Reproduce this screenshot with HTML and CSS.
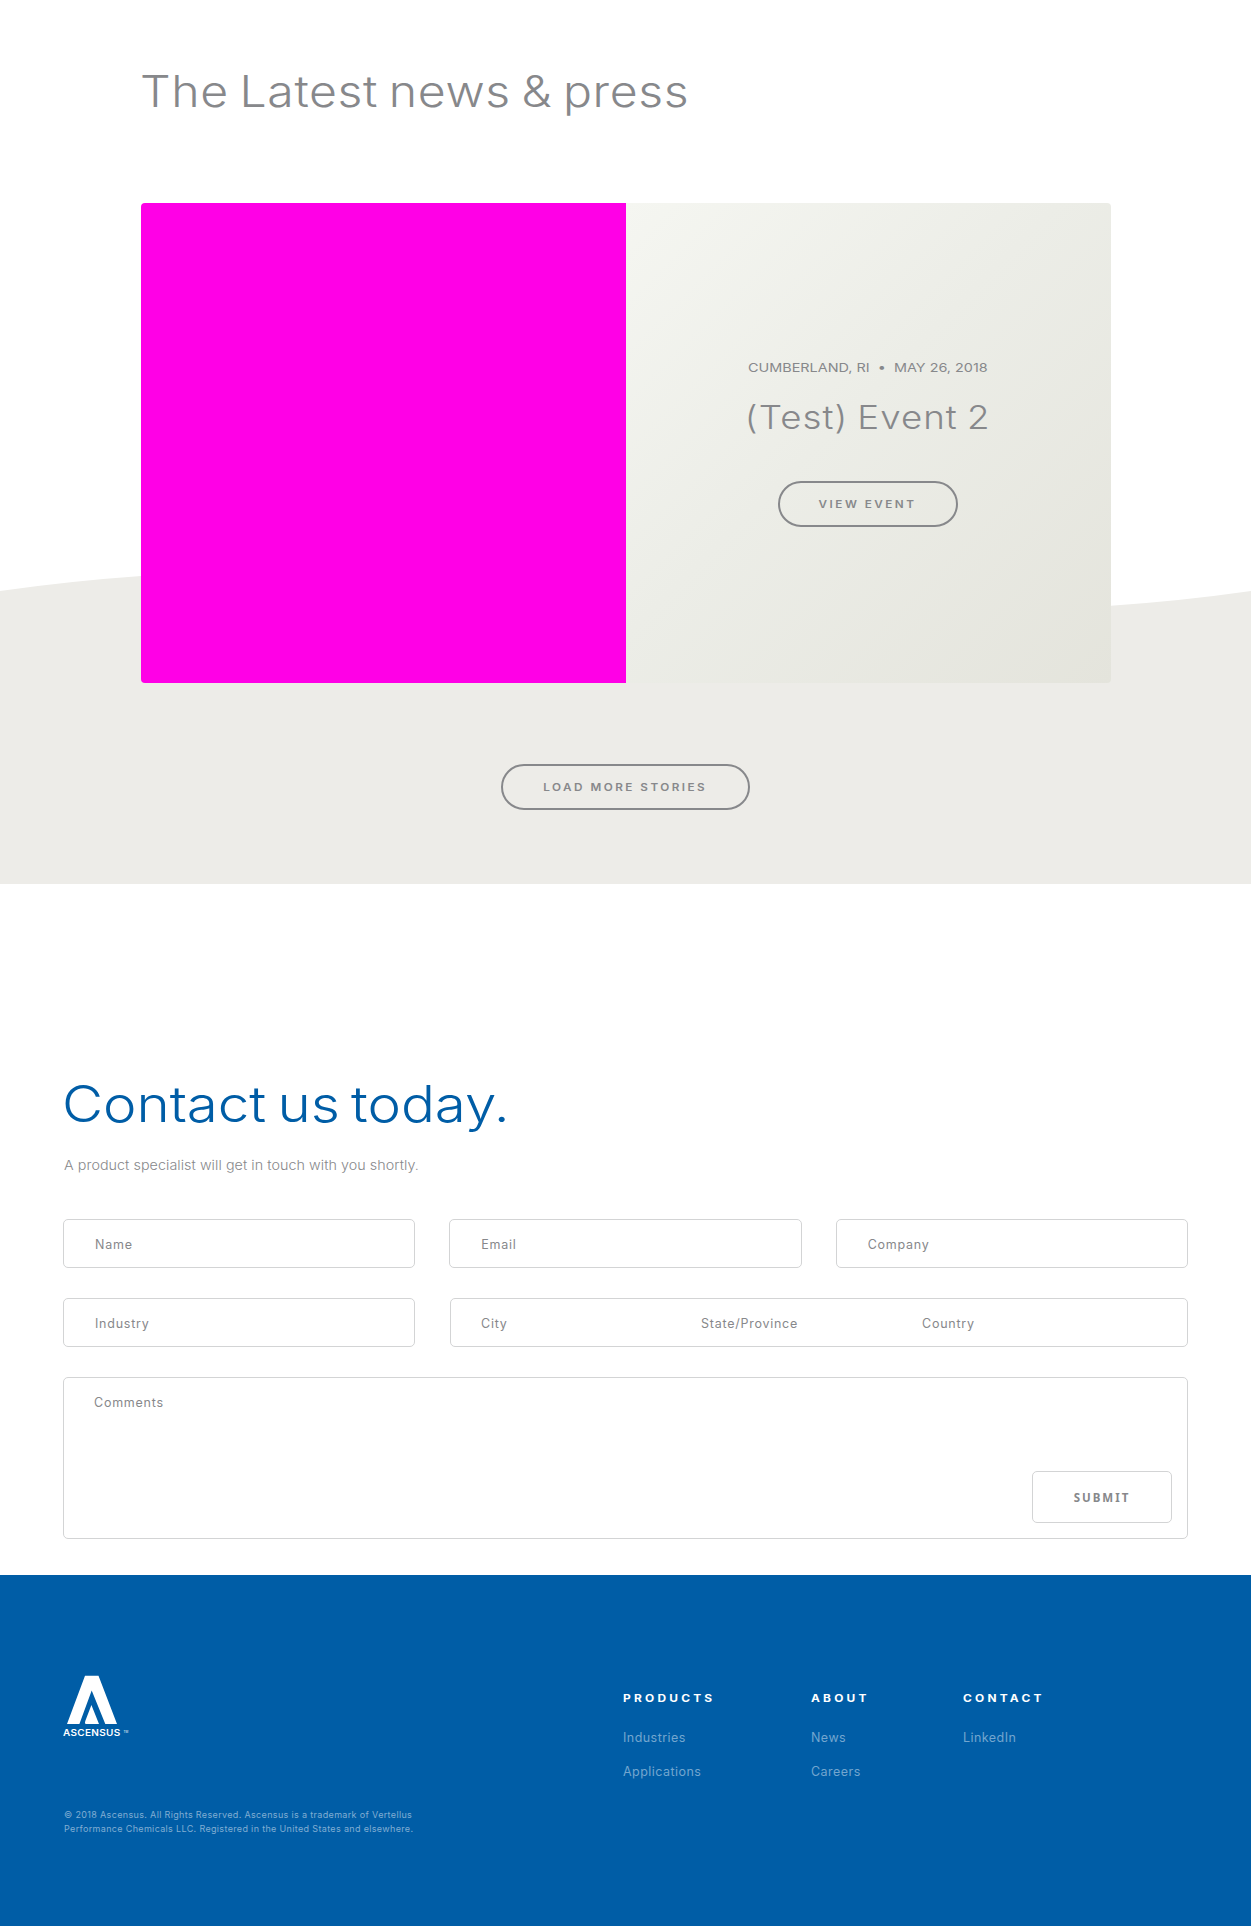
FILE: index.html
```html
<!DOCTYPE html>
<html lang="en">
<head>
<meta charset="utf-8">
<title>Ascensus – News &amp; Press</title>
<link rel="stylesheet" href="styles.css">
</head>
<body>
<section class="news">
  <svg class="wave" viewBox="0 0 1251 314" preserveAspectRatio="none" aria-hidden="true">
    <path fill="#edece8" d="M0 21Q70 11 141 6C450 -16 760 66 1111 35.7Q1181 31 1251 21V314H0Z"/>
  </svg>
  <div class="news-inner">
    <h2 class="news-heading">The Latest news &amp; press</h2>
    <article class="card">
      <div class="card-image"></div>
      <div class="card-body">
        <p class="card-meta">CUMBERLAND, RI&nbsp; •&nbsp; MAY 26, 2018</p>
        <h3 class="card-title">(Test) Event 2</h3>
        <a class="pill pill-event"><span>VIEW EVENT</span></a>
      </div>
    </article>
    <a class="pill pill-more"><span>LOAD MORE STORIES</span></a>
  </div>
</section>

<section class="contact">
  <h2 class="contact-heading">Contact us today.</h2>
  <p class="contact-sub">A product specialist will get in touch with you shortly.</p>
  <form class="form">
    <div class="row">
      <input class="field" type="text" placeholder="Name">
      <input class="field" type="text" placeholder="Email">
      <input class="field" type="text" placeholder="Company">
    </div>
    <div class="row row-location">
      <input class="field" type="text" placeholder="Industry">
      <div class="field-group">
        <input class="bare" type="text" placeholder="City">
        <input class="bare" type="text" placeholder="State/Province">
        <input class="bare" type="text" placeholder="Country">
      </div>
    </div>
    <div class="comments">
      <textarea class="comments-text" placeholder="Comments"></textarea>
      <button class="submit" type="button">SUBMIT</button>
    </div>
  </form>
</section>

<footer class="footer">
  <div class="brand">
    <svg class="logo" viewBox="0 0 70 62" role="img" aria-label="Ascensus">
      <path fill="#fff" d="M22 0.7H35.5L54 49H42.3L28.7 15.5L16.4 49H4Z"/>
      <path fill="#fff" d="M28.4 30L36 49H22.5Q21.5 47.8 22.3 46Z"/>
      <text class="logo-name" x="0" y="61" textLength="57.5" lengthAdjust="spacingAndGlyphs">ASCENSUS</text>
      <text class="logo-tm" x="60.5" y="57.5">TM</text>
    </svg>
    <p class="copyright">© 2018 Ascensus. All Rights Reserved. Ascensus is a trademark of Vertellus<br>Performance Chemicals LLC. Registered in the United States and elsewhere.</p>
  </div>
  <nav class="links">
    <div class="col">
      <h4 class="col-title">PRODUCTS</h4>
      <a class="link">Industries</a>
      <a class="link">Applications</a>
    </div>
    <div class="col">
      <h4 class="col-title">ABOUT</h4>
      <a class="link">News</a>
      <a class="link">Careers</a>
    </div>
    <div class="col">
      <h4 class="col-title">CONTACT</h4>
      <a class="link">LinkedIn</a>
    </div>
  </nav>
</footer>
</body>
</html>
```
FILE: styles.css
```css
* { box-sizing: border-box; }

body {
  margin: 0;
  background: #fff;
  color: #87888b;
  font-family: Inter, "Liberation Sans", sans-serif;
}

h2, h3, h4, p {
  width: fit-content;
  margin: 0;
  font-weight: 300;
  white-space: nowrap;
}

/* News */
.news {
  position: relative;
  height: 884px;
  padding: 61px 140px 0 141px;
}
.wave {
  position: absolute;
  left: 0;
  bottom: 0;
  width: 100%;
  height: 314px;
}
.news-inner {
  position: relative;
  display: flex;
  flex-direction: column;
  align-items: center;
}
.news-heading {
  align-self: flex-start;
  margin-left: -1px;
  font-size: 43px;
  line-height: 60px;
  letter-spacing: 0.55px;
  word-spacing: -3px;
  transform: scaleX(1.12);
  transform-origin: left;
}
.card {
  display: flex;
  width: 970px;
  height: 480px;
  margin-top: 82px;
  border-radius: 4px;
  overflow: hidden;
}
.card-image { width: 485px; background: #ff00e6; }
.card-body {
  width: 485px;
  display: flex;
  flex-direction: column;
  align-items: center;
  padding-top: 155px;
  background: linear-gradient(135deg, #f5f6f1 0%, #ecede7 45%, #e4e4dc 100%);
}
.card-meta {
  margin-right: 2px;
  font-size: 12px;
  font-weight: 400;
  line-height: 20px;
  transform: scaleX(1.2);
}
.card-title {
  margin: 20px 1px 0 0;
  font-size: 32.5px;
  line-height: 40px;
  letter-spacing: 0.9px;
  word-spacing: -2px;
  transform: scaleX(1.13);
}
.pill {
  display: flex;
  align-items: center;
  justify-content: center;
  height: 46px;
  margin-right: 1px;
  border: 2px solid #87888b;
  border-radius: 23px;
  font-size: 10.2px;
  font-weight: 600;
  letter-spacing: 2.15px;
}
.pill span { transform: scaleX(1.15); }
.pill-event { width: 180px; margin-top: 43px; }
.pill-more { width: 249px; margin-top: 81px; }

/* Contact */
.contact {
  height: 691px;
  padding: 190px 63px 0;
}
.contact-heading {
  color: #005da6;
  font-size: 50px;
  line-height: 60px;
  letter-spacing: -0.05px;
  word-spacing: -4px;
  transform: scaleX(1.13);
  transform-origin: left;
  margin-left: -1px;
}
.contact-sub {
  margin: 21px 0 44px 1px;
  font-size: 13px;
  line-height: 20px;
  letter-spacing: 0.05px;
  transform: scaleX(1.1);
  transform-origin: left;
}
.form { display: flex; flex-direction: column; gap: 30px; }
.row {
  display: grid;
  grid-template-columns: repeat(3, 1fr);
  gap: 34px;
}
.row-location { grid-template-columns: 352px 1fr; gap: 35px; }
.field, .bare, .comments-text {
  min-width: 0;
  color: #87888b;
  font: 400 12.5px/20px Inter, "Liberation Sans", sans-serif;
  letter-spacing: 0.75px;
  background: none;
  outline: none;
}
.field, .field-group, .comments {
  height: 49px;
  border: 1px solid #d3d4d5;
  border-radius: 5px;
}
.field { padding: 1px 30px 0 31px; }
.field-group {
  display: grid;
  grid-template-columns: 220px 221px 1fr;
  padding-left: 30px;
}
.bare { border: 0; padding: 2px 0 0; }
::placeholder { color: #87888b; opacity: 1; }
.comments {
  display: flex;
  align-items: flex-end;
  height: 162px;
  padding: 0 15px 15px 30px;
}
.comments-text {
  flex: 1;
  align-self: stretch;
  padding: 15px 0 0;
  border: 0;
  resize: none;
}
.submit {
  width: 140px;
  height: 52px;
  padding: 0;
  border: 1px solid #d3d4d5;
  border-radius: 5px;
  background: #fff;
  color: #87888b;
  font: 700 11.5px "Noto Sans", sans-serif;
  letter-spacing: 2px;
}

/* Footer */
.footer {
  display: flex;
  height: 351px;
  padding: 100px 63px 0;
  background: #005da6;
}
.brand { width: 560px; }
.logo { display: block; width: 70px; height: 62px; }
.logo-name { fill: #fff; font: 600 9.2px Inter, sans-serif; letter-spacing: 0.3px; }
.logo-tm { fill: #fff; font: 400 3px Inter, sans-serif; }
.copyright {
  margin: 71px 0 0 1px;
  color: #80aed3;
  font-size: 9px;
  font-weight: 400;
  line-height: 14px;
  letter-spacing: 0.34px;
}
.links {
  display: grid;
  grid-template-columns: 188px 152px 100px;
  padding-top: 13px;
}
.col-title {
  margin-bottom: 13px;
  color: #fff;
  font-size: 10.2px;
  font-weight: 700;
  line-height: 21px;
  height: 20px;
  letter-spacing: 2.75px;
  transform: scaleX(1.17);
  transform-origin: left;
}
.link {
  display: block;
  color: #73a6cf;
  font-size: 12.5px;
  line-height: 34px;
  letter-spacing: 0.45px;
}
```
